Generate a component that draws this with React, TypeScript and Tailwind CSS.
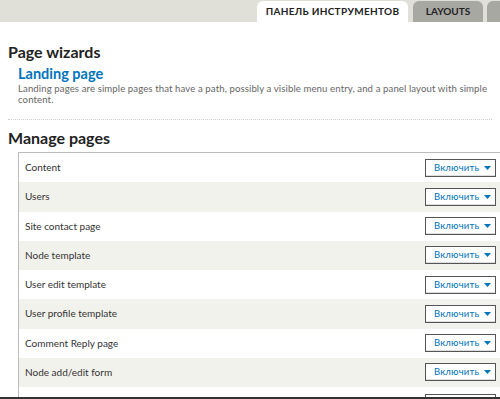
const rows = [
  "Content",
  "Users",
  "Site contact page",
  "Node template",
  "User edit template",
  "User profile template",
  "Comment Reply page",
  "Node add/edit form",
];

function EnableButton() {
  return (
    <div className="flex h-[18px] w-[71px] items-center justify-between border border-[#555] bg-white pl-[8px] pr-[4px] shadow-[inset_0_-1px_0_#ddd]">
      <span className="text-[9.5px] tracking-[0.2px] text-[#0074bd]">Включить</span>
      <svg width="7" height="4" viewBox="0 0 7 4">
        <path d="M0 0h7L3.5 4z" fill="#0074bd" />
      </svg>
    </div>
  );
}

export default function App() {
  return (
    <div
      className="relative h-[399px] w-[500px] overflow-hidden bg-white text-[#333]"
      style={{ fontFamily: "Lato, 'Noto Sans', sans-serif" }}
    >
      <div className="flex h-[22px] items-end justify-end overflow-hidden bg-[#e0e0d8]">
        <div className="flex h-[21px] w-[151px] items-center justify-center rounded-t-[6px] bg-white text-[10px] font-bold tracking-[0.3px] text-[#222]">
          ПАНЕЛЬ ИНСТРУМЕНТОВ
        </div>
        <div className="ml-[5px] flex h-[21px] w-[70px] items-center justify-center rounded-t-[6px] bg-[#a8a8a2] text-[10px] font-bold text-[#222]">
          LAYOUTS
        </div>
        <div className="ml-[4px] h-[21px] w-[13px] rounded-tl-[6px] bg-[#a8a8a2]" />
      </div>

      <div className="px-2">
        <h2 className="mt-[21px] text-[16px] font-bold leading-[18px] text-[#222]">
          Page wizards
        </h2>
        <div className="pl-[10px]">
          <div className="mt-[5px] text-[14.5px] font-bold leading-[16px] text-[#0074bd]">
            Landing page
          </div>
          <p className="mt-[1px] text-[9.6px] leading-[11px] tracking-[0.1px] text-[#666]">
            Landing pages are simple pages that have a path, possibly a visible
            menu entry, and a panel layout with simple content.
          </p>
        </div>
        <div className="mt-[14px] border-t border-dotted border-[#ccc]" />
        <h2 className="mt-[9px] text-[16px] font-bold leading-[18px] text-[#222]">
          Manage pages
        </h2>
      </div>

      <div className="ml-[18px] mt-[5px] border-l border-t border-[#bbb]">
        {rows.map((r, i) => (
          <div
            key={r}
            className={`flex h-[29.25px] items-center justify-between pl-[6px] pr-[4px] ${
              i % 2 ? "bg-[#f2f2ed]" : "bg-white"
            }`}
          >
            <span className="text-[10px] text-[#333]">{r}</span>
            <EnableButton />
          </div>
        ))}
        <div className="flex h-[29.25px] items-start justify-end pr-[4px] pt-[7px]">
          <div className="h-[18px] w-[71px] border border-[#555] bg-white" />
        </div>
      </div>

      <div className="absolute bottom-0 left-0 right-0 h-[2px] bg-[#333]" />
    </div>
  );
}
